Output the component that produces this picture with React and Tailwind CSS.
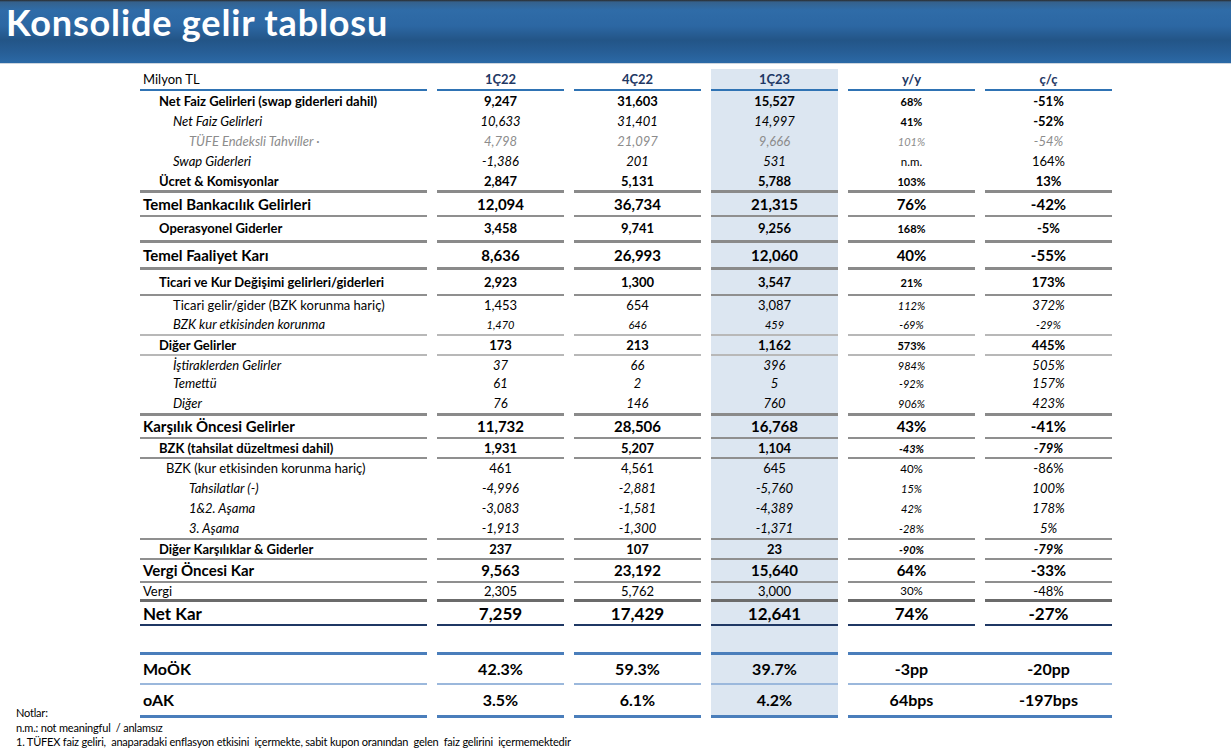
const GRID = "grid grid-cols-[287px_127px_127px_127px_127px_127px] gap-x-[10px]";

// text styles
const B = "text-[13px] font-bold";
const I = "text-[13px] italic";
const N = "text-[13px]";
const G = "text-[13px] italic text-[#8c8c8c]";
const GS = "text-[11px] italic text-[#8c8c8c]";
const LG = "text-[15px] font-bold";
const XL = "text-[17px] font-bold";
const SB = "text-[11px] font-bold";
const SI = "text-[11px] italic";
const SN = "text-[11.5px]";
const SBI = "text-[11px] font-bold italic";
const BI = "text-[13px] font-bold italic";

// row lines
const G3 = "border-b-[3px] border-[#8a8a8a]";
const G2 = "border-b-2 border-[#8f8f8f]";
const L2 = "border-b-2 border-[#b8b8b8]";
const D3 = "border-b-[3px] border-[#6b6b6b]";
const NV = "border-b-2 border-[#1f3864]";

const rows = [
  { label: "Net Faiz Gelirleri (swap giderleri dahil)", pad: "pl-[19px]", h: "h-[20px]", ls: B, ns: B, ys: SB, cs: B, line: "", v: ["9,247", "31,603", "15,527", "68%", "-51%"] },
  { label: "Net Faiz Gelirleri", pad: "pl-[33px]", h: "h-[20px]", ls: I, ns: I, ys: SB, cs: B, line: "", v: ["10,633", "31,401", "14,997", "41%", "-52%"] },
  { label: "TÜFE Endeksli Tahviller ·", pad: "pl-[49px]", h: "h-[20px]", ls: G, ns: G, ys: GS, cs: G, line: "", v: ["4,798", "21,097", "9,666", "101%", "-54%"] },
  { label: "Swap Giderleri", pad: "pl-[33px]", h: "h-[21px]", ls: I, ns: I, ys: SN, cs: N, line: "", v: ["-1,386", "201", "531", "n.m.", "164%"] },
  { label: "Ücret & Komisyonlar", pad: "pl-[19px]", h: "h-[21px]", ls: B, ns: B, ys: SB, cs: B, line: G3, v: ["2,847", "5,131", "5,788", "103%", "13%"] },
  { label: "Temel Bankacılık Gelirleri", pad: "pl-[3px]", h: "h-[24px]", ls: LG, ns: LG, ys: LG, cs: LG, line: G2, v: ["12,094", "36,734", "21,315", "76%", "-42%"] },
  { label: "Operasyonel Giderler", pad: "pl-[19px]", h: "h-[26px]", ls: B, ns: B, ys: SB, cs: B, line: G3, v: ["3,458", "9,741", "9,256", "168%", "-5%"] },
  { label: "Temel Faaliyet Karı", pad: "pl-[3px]", h: "h-[27px]", ls: LG, ns: LG, ys: LG, cs: LG, line: G3, v: ["8,636", "26,993", "12,060", "40%", "-55%"] },
  { label: "Ticari ve Kur Değişimi gelirleri/giderleri", pad: "pl-[19px]", h: "h-[26px]", ls: B, ns: B, ys: SB, cs: B, line: G2, v: ["2,923", "1,300", "3,547", "21%", "173%"] },
  { label: "Ticari gelir/gider (BZK korunma hariç)", pad: "pl-[33px]", h: "h-[19px]", ls: N, ns: N, ys: SI, cs: I, line: "", v: ["1,453", "654", "3,087", "112%", "372%"] },
  { label: "BZK kur etkisinden korunma", pad: "pl-[33px]", h: "h-[21px]", ls: I, ns: SI, ys: SI, cs: SI, line: L2, v: ["1,470", "646", "459", "-69%", "-29%"] },
  { label: "Diğer Gelirler", pad: "pl-[19px]", h: "h-[20px]", ls: B, ns: B, ys: SB, cs: B, line: L2, v: ["173", "213", "1,162", "573%", "445%"] },
  { label: "İştiraklerden Gelirler", pad: "pl-[33px]", h: "h-[18px]", ls: I, ns: I, ys: SI, cs: I, line: "", v: ["37", "66", "396", "984%", "505%"] },
  { label: "Temettü", pad: "pl-[33px]", h: "h-[19px]", ls: I, ns: I, ys: SI, cs: I, line: "", v: ["61", "2", "5", "-92%", "157%"] },
  { label: "Diğer", pad: "pl-[33px]", h: "h-[23px]", ls: I, ns: I, ys: SI, cs: I, line: G3, v: ["76", "146", "760", "906%", "423%"] },
  { label: "Karşılık Öncesi Gelirler", pad: "pl-[3px]", h: "h-[23px]", ls: LG, ns: LG, ys: LG, cs: LG, line: G2, v: ["11,732", "28,506", "16,768", "43%", "-41%"] },
  { label: "BZK (tahsilat düzeltmesi dahil)", pad: "pl-[19px]", h: "h-[20px]", ls: B, ns: B, ys: SBI, cs: BI, line: G2, v: ["1,931", "5,207", "1,104", "-43%", "-79%"] },
  { label: "BZK (kur etkisinden korunma hariç)", pad: "pl-[26px]", h: "h-[19px]", ls: N, ns: N, ys: SN, cs: N, line: "", v: ["461", "4,561", "645", "40%", "-86%"] },
  { label: "Tahsilatlar (-)", pad: "pl-[49px]", h: "h-[20px]", ls: I, ns: I, ys: SI, cs: I, line: "", v: ["-4,996", "-2,881", "-5,760", "15%", "100%"] },
  { label: "1&2. Aşama", pad: "pl-[49px]", h: "h-[20px]", ls: I, ns: I, ys: SI, cs: I, line: "", v: ["-3,083", "-1,581", "-4,389", "42%", "178%"] },
  { label: "3. Aşama", pad: "pl-[49px]", h: "h-[22px]", ls: I, ns: I, ys: SI, cs: I, line: G2, v: ["-1,913", "-1,300", "-1,371", "-28%", "5%"] },
  { label: "Diğer Karşılıklar & Giderler", pad: "pl-[19px]", h: "h-[20px]", ls: B, ns: B, ys: SBI, cs: BI, line: G2, v: ["237", "107", "23", "-90%", "-79%"] },
  { label: "Vergi Öncesi Kar", pad: "pl-[3px]", h: "h-[23px]", ls: LG, ns: LG, ys: LG, cs: LG, line: G2, v: ["9,563", "23,192", "15,640", "64%", "-33%"] },
  { label: "Vergi", pad: "pl-[3px]", h: "h-[19px]", ls: N, ns: N, ys: SN, cs: N, line: D3, v: ["2,305", "5,762", "3,000", "30%", "-48%"] },
  { label: "Net Kar", pad: "pl-[3px]", h: "h-[24px]", ls: XL, ns: XL, ys: XL, cs: XL, line: NV, v: ["7,259", "17,429", "12,641", "74%", "-27%"] },
];

const ratios = [
  { label: "MoÖK", top: "border-t-[3px] border-t-[#4a7ebb]", line: "border-b-2 border-b-[#9bb8dc]", h: "h-[33px]", v: ["42.3%", "59.3%", "39.7%", "-3pp", "-20pp"] },
  { label: "oAK", top: "", line: "border-b-[3px] border-b-[#4a7ebb]", h: "h-[33px]", v: ["3.5%", "6.1%", "4.2%", "64bps", "-197bps"] },
];

function Row({ r }) {
  return (
    <div className={GRID}>
      <div className={`flex items-center leading-none ${r.h} ${r.pad} ${r.line} ${r.ls}`}>{r.label}</div>
      {r.v.map((val, i) => (
        <div
          key={i}
          className={`flex items-center justify-center leading-none ${r.h} ${r.line} ${i === 2 ? "bg-[#dce6f1]" : ""} ${i < 3 ? r.ns : i === 3 ? r.ys : r.cs}`}
        >
          {val}
        </div>
      ))}
    </div>
  );
}

function RatioRow({ r }) {
  const cell = `flex items-center leading-none text-[16px] font-bold ${r.h} ${r.top} ${r.line}`;
  return (
    <div className={GRID}>
      <div className={`${cell} pl-[3px]`}>{r.label}</div>
      <div className={`${cell} justify-center`}>{r.v[0]}</div>
      <div className={`${cell} justify-center`}>{r.v[1]}</div>
      <div className={`${cell} justify-center bg-[#dce6f1]`}>{r.v[2]}</div>
      <div className={`${cell} col-span-2 gap-[10px]`}>
        <span className="w-[127px] text-center">{r.v[3]}</span>
        <span className="w-[127px] text-center">{r.v[4]}</span>
      </div>
    </div>
  );
}

export default function App() {
  return (
    <div className="w-[1231px] min-h-[751px] bg-white text-black font-['Lato',sans-serif] overflow-hidden">
      {/* title bar */}
      <div className="h-[64px] border-b border-[#cdd5de] bg-[linear-gradient(180deg,#2a2a2a_0px,#35618c_2px,#2f6ca8_10px,#2c67a3_26px,#235587_40px,#275e96_52px,#2b69a6_63px)]">
        <h1 className="pl-[6px] text-[36px] leading-[44px] font-bold text-white tracking-[0.85px]">
          Konsolide gelir tablosu
        </h1>
      </div>

      {/* table */}
      <div className="ml-[140px] mt-[5px]">
        <div className={GRID}>
          <div className="flex items-center h-[22px] pl-[3px] border-b-2 border-[#2f73b4] text-[13px] leading-none">Milyon TL</div>
          {["1Ç22", "4Ç22", "1Ç23", "y/y", "ç/ç"].map((c, i) => (
            <div
              key={c}
              className={`flex items-center justify-center h-[22px] border-b-2 border-[#2f73b4] text-[13px] font-bold leading-none text-[#1f3864] ${i === 2 ? "bg-[#dce6f1]" : ""}`}
            >
              {c}
            </div>
          ))}
        </div>

        {rows.map((r) => (
          <Row key={r.label} r={r} />
        ))}

        <div className={GRID}>
          <div className="h-[26px]" />
          <div />
          <div />
          <div className="bg-[#dce6f1]" />
        </div>

        {ratios.map((r) => (
          <RatioRow key={r.label} r={r} />
        ))}
      </div>

      {/* notes */}
      <div className="-mt-[12px] pl-[16px] text-[11px] leading-[14.5px] tracking-[-0.2px]">
        <div>Notlar:</div>
        <div>n.m.: not meaningful&nbsp; / anlamsız</div>
        <div>1. TÜFEX faiz geliri,&nbsp; anaparadaki enflasyon etkisini&nbsp; içermekte, sabit kupon oranından&nbsp; gelen&nbsp; faiz gelirini&nbsp; içermemektedir</div>
      </div>
    </div>
  );
}
